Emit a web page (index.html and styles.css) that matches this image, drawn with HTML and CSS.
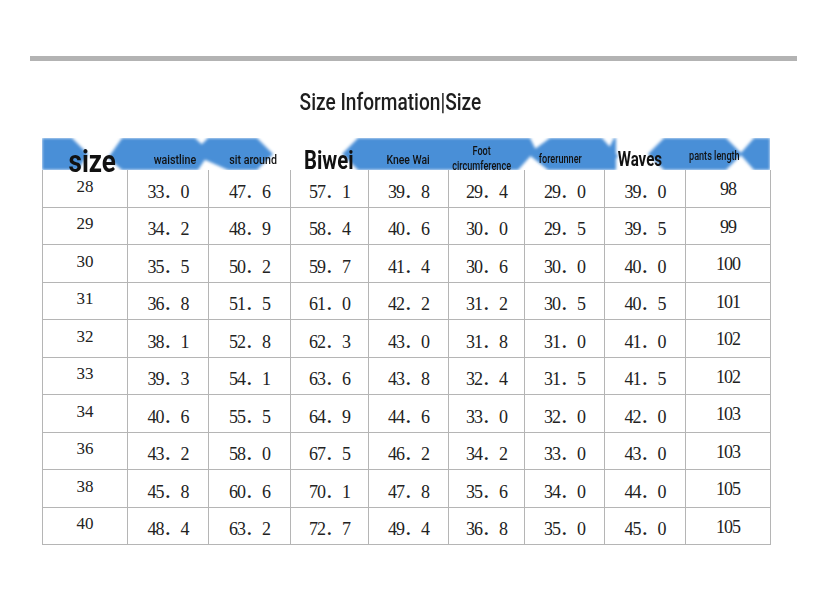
FILE: index.html
```html
<!DOCTYPE html>
<html>
<head>
<meta charset="utf-8">
<link rel="stylesheet" href="styles.css">
</head>
<body>
<div class="page">
  <div class="topbar"></div>
  <h1 class="title"><span class="cond">Size Information|Size</span></h1>
  <div class="chart">
    <div class="head">
      <svg class="head-bg" width="728" height="32" viewBox="0 0 728 32" aria-hidden="true">
        <defs><filter id="soft" x="-5%" y="-30%" width="110%" height="160%"><feGaussianBlur stdDeviation="1.6"/></filter></defs>
        <g fill="#4a8fd7" filter="url(#soft)">
          <polygon points="0,0 30,0 46,16 36,32 0,32"/>
          <polygon points="66,20 80,0 153,0 168,14 156,32 80,32"/>
          <polygon points="150,16 166,0 215,0 231,16 215,32 186,32"/>
          <polygon points="300,16 316,0 488,0 494,12 476,32 316,32"/>
          <polygon points="486,16 508,0 560,0 576,18 566,32 506,32"/>
          <polygon points="553,32 564,16 572,0 574,0 574,32"/>
          <polygon points="606,16 622,0 684,0 700,16 684,32 622,32"/>
          <polygon points="698,16 712,0 728,0 728,32 712,32"/>
        </g>
      </svg>
      <div class="hc h-size"><span class="cond">size</span></div>
      <div class="hc h-sm h-waist"><span class="cond">waistline</span></div>
      <div class="hc h-sm h-sit"><span class="cond">sit around</span></div>
      <div class="hc h-big"><span class="cond">Biwei</span></div>
      <div class="hc h-sm"><span class="cond">Knee Wai</span></div>
      <div class="hc h-xs h-foot"><span class="cond">Foot<br>circumference</span></div>
      <div class="hc h-xs h-fore"><span class="cond">forerunner</span></div>
      <div class="hc h-mid h-waves"><span class="cond">Waves</span></div>
      <div class="hc h-xs h-up h-pants"><span class="cond">pants length</span></div>
    </div>
    <div class="body">
      <div class="c s">28</div><div class="c">33．0</div><div class="c">47．6</div><div class="c">57．1</div><div class="c">39．8</div><div class="c">29．4</div><div class="c">29．0</div><div class="c">39．0</div><div class="c">98</div>
      <div class="c s">29</div><div class="c">34．2</div><div class="c">48．9</div><div class="c">58．4</div><div class="c">40．6</div><div class="c">30．0</div><div class="c">29．5</div><div class="c">39．5</div><div class="c">99</div>
      <div class="c s">30</div><div class="c">35．5</div><div class="c">50．2</div><div class="c">59．7</div><div class="c">41．4</div><div class="c">30．6</div><div class="c">30．0</div><div class="c">40．0</div><div class="c">100</div>
      <div class="c s">31</div><div class="c">36．8</div><div class="c">51．5</div><div class="c">61．0</div><div class="c">42．2</div><div class="c">31．2</div><div class="c">30．5</div><div class="c">40．5</div><div class="c">101</div>
      <div class="c s">32</div><div class="c">38．1</div><div class="c">52．8</div><div class="c">62．3</div><div class="c">43．0</div><div class="c">31．8</div><div class="c">31．0</div><div class="c">41．0</div><div class="c">102</div>
      <div class="c s">33</div><div class="c">39．3</div><div class="c">54．1</div><div class="c">63．6</div><div class="c">43．8</div><div class="c">32．4</div><div class="c">31．5</div><div class="c">41．5</div><div class="c">102</div>
      <div class="c s">34</div><div class="c">40．6</div><div class="c">55．5</div><div class="c">64．9</div><div class="c">44．6</div><div class="c">33．0</div><div class="c">32．0</div><div class="c">42．0</div><div class="c">103</div>
      <div class="c s">36</div><div class="c">43．2</div><div class="c">58．0</div><div class="c">67．5</div><div class="c">46．2</div><div class="c">34．2</div><div class="c">33．0</div><div class="c">43．0</div><div class="c">103</div>
      <div class="c s">38</div><div class="c">45．8</div><div class="c">60．6</div><div class="c">70．1</div><div class="c">47．8</div><div class="c">35．6</div><div class="c">34．0</div><div class="c">44．0</div><div class="c">105</div>
      <div class="c s">40</div><div class="c">48．4</div><div class="c">63．2</div><div class="c">72．7</div><div class="c">49．4</div><div class="c">36．8</div><div class="c">35．0</div><div class="c">45．0</div><div class="c">105</div>
    </div>
  </div>
</div>
</body>
</html>
```

FILE: styles.css
```css
* { box-sizing: border-box; }
html, body { margin: 0; padding: 0; background: #fff; }
.page {
  width: 815px;
  height: 612px;
  padding-top: 56px;
}
.topbar {
  margin-left: 30px;
  width: 767px;
  height: 5px;
  background: #b3b3b3;
}
.cond {
  display: inline-block;
  transform: scaleX(0.8);
  white-space: nowrap;
}
.title {
  margin: 28px 0 0 0;
  width: 781px;
  height: 49px;
  text-align: center;
  font-family: Roboto, "Liberation Sans", sans-serif;
  font-weight: 500;
  font-size: 23px;
  line-height: 28px;
  color: #1e1e1e;
}
.title .cond { transform: scaleX(0.83); }
.chart {
  margin-left: 42px;
  width: 728px;
}
.head {
  position: relative;
  height: 32px;
  display: grid;
  grid-template-columns: 85px 81px 82px 78px 80px 76px 80px 81px 85px;
}
.head-bg {
  position: absolute;
  left: 0;
  top: 0;
}
.hc {
  position: relative;
  display: flex;
  align-items: center;
  justify-content: center;
  text-align: center;
  font-family: Roboto, "Liberation Sans", sans-serif;
  color: #111;
  line-height: 1;
}
.h-size {
  font-size: 31px;
  font-weight: 700;
  padding-top: 8px;
  padding-left: 16px;
}
.h-size .cond { transform: scaleX(0.84); }
.h-sm { font-size: 13px; font-weight: 500; padding-top: 4px; }
.h-waist { padding-left: 14px; }
.h-waist .cond { transform: scaleX(0.82); }
.h-sit { padding-left: 8px; }
.h-sit .cond { transform: scaleX(0.82); }
.h-xs { font-size: 12px; font-weight: 500; line-height: 15px; padding-top: 3px; }
.h-xs .cond { transform: scaleX(0.76); }
.h-foot { padding-right: 8px; }
.h-fore { padding-right: 8px; }
.h-up { padding-top: 0; padding-bottom: 2px; }
.h-pants { padding-right: 26px; }
.h-big { font-size: 26px; font-weight: 700; padding-top: 5px; }
.h-big .cond { transform: scaleX(0.78); }
.h-mid { font-size: 21px; font-weight: 700; padding-top: 4px; }
.h-mid .cond { transform: scaleX(0.72); }
.h-waves { padding-right: 10px; }
.body {
  display: grid;
  grid-template-columns: 85px 81px 82px 78px 80px 76px 80px 81px 85px;
  grid-auto-rows: 37.5px;
  border-left: 1px solid #b5b5b5;
}
.c {
  display: flex;
  align-items: center;
  justify-content: center;
  border-right: 1px solid #b5b5b5;
  border-bottom: 1px solid #b5b5b5;
  font-family: "Liberation Serif", "Noto Sans CJK SC", serif;
  font-size: 18px;
  letter-spacing: -1px;
  color: #222;
  padding-top: 3px;
}
.c.s {
  font-size: 17px;
  letter-spacing: 0;
  padding-top: 0;
  padding-bottom: 3px;
}
```
